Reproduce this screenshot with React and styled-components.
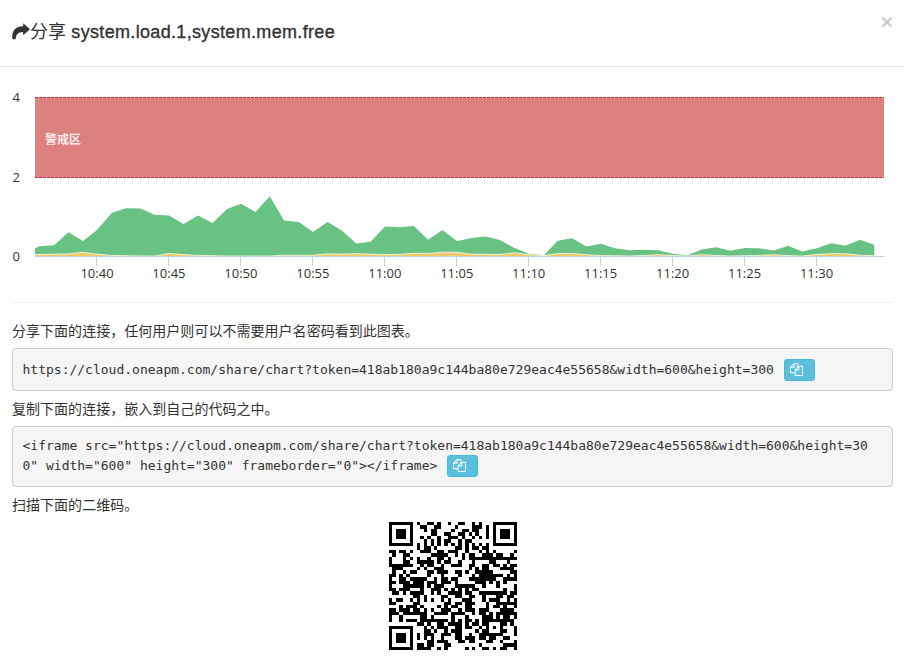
import React from "react";
import styled, { createGlobalStyle } from "styled-components";

const SHARE_URL =
  "https://cloud.oneapm.com/share/chart?token=418ab180a9c144ba80e729eac4e55658&width=600&height=300";
const EMBED_CODE = `<iframe src="${SHARE_URL}" width="600" height="300" frameborder="0"></iframe>`;

/* ---------- QR code, version 5, level L ---------- */
const SIZE = 37;
const DATA_WORDS = 108;
const EC_WORDS = 26;

const gfMul = (x, y) => {
  let z = 0;
  for (let i = 7; i >= 0; i--) {
    z = (z << 1) ^ ((z >>> 7) * 0x11d);
    z ^= ((y >>> i) & 1) * x;
  }
  return z;
};

function errorWords(data) {
  const div = new Array(EC_WORDS).fill(0);
  div[EC_WORDS - 1] = 1;
  let root = 1;
  for (let i = 0; i < EC_WORDS; i++) {
    for (let j = 0; j < EC_WORDS; j++) {
      div[j] = gfMul(div[j], root);
      if (j + 1 < EC_WORDS) div[j] ^= div[j + 1];
    }
    root = gfMul(root, 2);
  }
  const rem = new Array(EC_WORDS).fill(0);
  for (const b of data) {
    const f = b ^ rem.shift();
    rem.push(0);
    div.forEach((c, i) => {
      rem[i] ^= gfMul(c, f);
    });
  }
  return rem;
}

function codewords(text) {
  const bits = [];
  const push = (v, n) => {
    for (let i = n - 1; i >= 0; i--) bits.push((v >>> i) & 1);
  };
  push(4, 4);
  push(text.length, 8);
  for (const c of text) push(c.charCodeAt(0), 8);
  push(0, 4);
  while (bits.length % 8) bits.push(0);
  const data = [];
  for (let i = 0; i < bits.length; i += 8) data.push(parseInt(bits.slice(i, i + 8).join(""), 2));
  for (let p = 0xec; data.length < DATA_WORDS; p ^= 0xec ^ 0x11) data.push(p);
  return [...data, ...errorWords(data)];
}

// Mask pattern 6 of the QR specification.
const MASK = 6;
const masked = (x, y) => (((x * y) % 2) + ((x * y) % 3)) % 2 === 0;

function qrMatrix(text) {
  const m = Array.from({ length: SIZE }, () => new Array(SIZE).fill(null));
  const set = (x, y, v) => {
    if (x >= 0 && y >= 0 && x < SIZE && y < SIZE) m[y][x] = !!v;
  };
  for (let i = 0; i < SIZE; i++) {
    set(6, i, i % 2 === 0);
    set(i, 6, i % 2 === 0);
  }
  [[3, 3], [SIZE - 4, 3], [3, SIZE - 4]].forEach(([cx, cy]) => {
    for (let dy = -4; dy <= 4; dy++)
      for (let dx = -4; dx <= 4; dx++) {
        const d = Math.max(Math.abs(dx), Math.abs(dy));
        set(cx + dx, cy + dy, d !== 2 && d !== 4);
      }
  });
  for (let dy = -2; dy <= 2; dy++)
    for (let dx = -2; dx <= 2; dx++) set(30 + dx, 30 + dy, Math.max(Math.abs(dx), Math.abs(dy)) !== 1);

  const head = (1 << 3) | MASK;
  let rem = head;
  for (let i = 0; i < 10; i++) rem = (rem << 1) ^ ((rem >>> 9) * 0x537);
  const fmt = ((head << 10) | rem) ^ 0x5412;
  const bit = (i) => (fmt >>> i) & 1;
  for (let i = 0; i <= 5; i++) set(8, i, bit(i));
  set(8, 7, bit(6));
  set(8, 8, bit(7));
  set(7, 8, bit(8));
  for (let i = 9; i < 15; i++) set(14 - i, 8, bit(i));
  for (let i = 0; i < 8; i++) set(SIZE - 1 - i, 8, bit(i));
  for (let i = 8; i < 15; i++) set(8, SIZE - 15 + i, bit(i));
  set(8, SIZE - 8, 1);

  const words = codewords(text);
  let n = 0;
  for (let right = SIZE - 1; right >= 1; right -= 2) {
    if (right === 6) right = 5;
    for (let v = 0; v < SIZE; v++)
      for (let j = 0; j < 2; j++) {
        const x = right - j;
        const y = ((right + 1) & 2) === 0 ? SIZE - 1 - v : v;
        if (m[y][x] !== null) continue;
        const b = n < words.length * 8 ? (words[n >>> 3] >>> (7 - (n & 7))) & 1 : 0;
        n++;
        m[y][x] = !!b !== masked(x, y);
      }
  }
  return m;
}

function QrCode({ text, size }) {
  const u = size / SIZE;
  const d = qrMatrix(text)
    .flatMap((row, y) =>
      row.map((on, x) => {
        if (!on) return "";
        const x0 = Math.round(x * u);
        const x1 = Math.round((x + 1) * u);
        const y0 = Math.round(y * u);
        const y1 = Math.round((y + 1) * u);
        return `M${x0} ${y0}H${x1}V${y1}H${x0}z`;
      })
    )
    .join("");
  return (
    <svg width={size} height={size} shapeRendering="crispEdges">
      <path d={d} fill="#000" />
    </svg>
  );
}

/* ---------- Chart ---------- */
const LOAD = [
  [35, 248.5], [39.3, 246.3], [54, 245.3], [68.5, 232.3], [83, 241], [97, 230], [112, 212.7],
  [126, 208.3], [140.5, 208.5], [154.8, 214.7], [169, 215.5], [183.5, 224], [198, 215.5],
  [212.5, 223], [227, 209], [241, 203.7], [255.5, 212], [269.8, 196.3], [284, 220.5],
  [298.7, 222], [313, 232], [327.5, 222], [341.8, 230.5], [356.2, 243.5], [370.6, 241.7],
  [385, 226.5], [399.3, 227.2], [413.8, 226], [428.1, 239.8], [442.5, 230], [457, 241.3],
  [471.3, 238], [485.7, 236.5], [500, 240], [514.5, 248], [529, 253.7], [544, 255.3],
  [557.6, 240.8], [572, 238.3], [586.4, 246.4], [600.8, 243.7], [615, 248.3], [629.6, 250.2],
  [644, 249.8], [658.4, 250.2], [672.8, 253.7], [687.5, 255.3], [701.8, 249.5], [716, 247.3],
  [730.4, 250.7], [744.8, 248], [759, 248.3], [773.6, 250.5], [788, 245.8], [802.2, 251.4],
  [816.8, 248.2], [831, 243.3], [845.4, 245.7], [860, 239.7], [874.3, 244.8],
];
const MEMORY = [
  [35, 254.5], [54, 254.2], [68.5, 253.8], [83, 252.3], [97, 254.2], [112, 255.4], [141, 256],
  [155, 256], [169, 253.4], [183.5, 254.6], [198, 255.4], [227, 256], [270, 256], [284, 255.2],
  [313, 255.2], [327.5, 253.8], [342, 254.1], [356, 253.6], [385, 254.6], [399, 254.4],
  [413.8, 253.3], [428, 253.4], [442.5, 252.2], [457, 252.3], [471.3, 254.1], [500, 254.4],
  [514.5, 252.7], [529, 254.7], [544, 255.6], [557.6, 253.6], [572, 253.4], [586.4, 254.7],
  [601, 255.6], [630, 256], [644, 255.4], [658.4, 254.7], [673, 255.5], [687.5, 256],
  [701.8, 254.7], [716, 255.5], [730.4, 256], [759, 255.4], [773.6, 254.7], [788, 255.6],
  [802.2, 256], [816.8, 254.4], [831, 253.6], [845.4, 253.7], [860, 255.2], [874.3, 255.7],
];
const TIMES = ["10:40", "10:45", "10:50", "10:55", "11:00", "11:05", "11:10", "11:15", "11:20", "11:25", "11:30"];
const BASE = 256.5;

const line = (pts) => pts.map(([x, y]) => `${x} ${y}`).join("L");
const area = (pts) => `M${line(pts)}L${pts[pts.length - 1][0]} ${BASE}L${pts[0][0]} ${BASE}Z`;

function LoadChart() {
  return (
    <Plot width="904" height="222" viewBox="0 67 904 222">
      <rect x="35" y="97" width="849" height="81" fill="#dd817e" />
      <path d="M35 97.5H884M35 177.5H884" stroke="#e0e0e0" />
      <path d="M35 97.5H884M35 177.5H884" stroke="#c1272d" strokeDasharray="3 1" />
      <WarningText x="45" y="144">警戒区</WarningText>
      <path d={area(LOAD)} fill="#68c284" />
      <path d={area(MEMORY)} fill="#eecb69" />
      <path d={`M${line(MEMORY)}`} fill="none" stroke="#fff" strokeOpacity="0.75" />
      <path d="M35 256.5H884" stroke="#c0d0e0" />
      {TIMES.map((t, i) => (
        <g key={t}>
          <path d={`M${96.5 + 72 * i} 257V266`} stroke="#c0d0e0" />
          <AxisText x={97 + 71.95 * i} y="278" textAnchor="middle">{t}</AxisText>
        </g>
      ))}
      {[[4, 102], [2, 182], [0, 261]].map(([v, y]) => (
        <AxisText key={v} x="20" y={y} textAnchor="end">{v}</AxisText>
      ))}
    </Plot>
  );
}

const ShareIcon = () => (
  <svg width="18" height="18" viewBox="0 0 18 18">
    <path
      fill="#333"
      d="M11.2 .3 18 6.300 11.200 12.300V9.300C6.600 9.100 4.300 10.700 3.500 16.300H.4C-.4 8.500 2.800 3.500 11.200 3.300Z"
    />
  </svg>
);

const CopyIcon = () => (
  <svg width="13" height="13" viewBox="0 0 1792 1792">
    <path
      fill="#fff"
      d="M1696 384q40 0 68 28t28 68v1216q0 40-28 68t-68 28h-960q-40 0-68-28t-28-68v-288h-544q-40 0-68-28t-28-68v-672q0-40 20-88t48-76l408-408q28-28 76-48t88-20h416q40 0 68 28t28 68v328q68-40 128-40h416zm-544 213l-299 299h299v-299zm-640-384l-299 299h299v-299zm196 647l316-316v-416h-384v416q0 40-28 68t-68 28h-416v640h512v-256q0-40 20-88t48-76zm956 804v-1152h-384v416q0 40-28 68t-68 28h-416v640h896z"
    />
  </svg>
);

/* ---------- Layout ---------- */
const Global = createGlobalStyle`
  * { box-sizing: border-box; }
  body { margin: 0; background: #fff; overflow: hidden; }
`;

const Dialog = styled.div`
  width: 904px;
  height: 667px;
  overflow: hidden;
  color: #333;
  font: 14px/20px "Liberation Sans", "Noto Sans CJK SC", sans-serif;
`;

const Header = styled.header`
  display: flex;
  justify-content: space-between;
  height: 67px;
  padding: 0 11px 0 12px;
  border-bottom: 1px solid #e5e5e5;
`;

const Title = styled.h4`
  display: flex;
  align-items: center;
  height: 26px;
  margin: 19px 0 0;
  font-size: 18px;
  font-weight: 400;
  white-space: pre;
`;

const MetricNames = styled.span`
  letter-spacing: 0.33px;
  -webkit-text-stroke: 0.35px #333;
`;

const Close = styled.button`
  height: 20px;
  margin: 12px 0 0;
  padding: 0;
  border: 0;
  background: none;
  color: #ccc;
  font: 700 21px/20px "Liberation Sans", sans-serif;
`;

const Plot = styled.svg`
  display: block;
`;

const AxisText = styled.text`
  font: 13px "Open Sans", sans-serif;
  fill: #333;
`;

const WarningText = styled.text`
  font: 700 12px "Noto Sans CJK SC", sans-serif;
  fill: #fbeaea;
`;

const Divider = styled.hr`
  height: 1px;
  margin: 13px 11px 18px 12px;
  border: 0;
  background: #eee;
`;

const Body = styled.section`
  padding: 0 11px 0 12px;
`;

const Hint = styled.p`
  height: 20px;
  margin: 0;
  letter-spacing: 0.03px;
`;

const CodeBox = styled.div`
  height: ${(p) => p.$height}px;
  margin: 7px 0 8px;
  padding: ${(p) => p.$top}px 10px 0 9.5px;
  border: 1px solid #ccc;
  border-radius: 4px;
  background: #f5f5f5;
  font: 13px/20px "DejaVu Sans Mono", monospace;
  word-break: break-all;
`;

const CopyButton = styled.button`
  display: inline-flex;
  align-items: center;
  width: 31px;
  height: 22px;
  margin: ${(p) => p.$lift}px 0 -1px 10px;
  padding: 0 5px;
  border: 1px solid #46b8da;
  border-radius: 3px;
  background: #5bc0de;
  vertical-align: middle;
  transform: translateY(-1px);
`;

const QrHolder = styled.div`
  display: flex;
  justify-content: center;
  margin-top: 7px;
`;

export default function App() {
  return (
    <Dialog>
      <Global />
      <Header>
        <Title>
          <ShareIcon />分享<MetricNames> system.load.1,system.mem.free</MetricNames>
        </Title>
        <Close>×</Close>
      </Header>
      <LoadChart />
      <Divider />
      <Body>
        <Hint>分享下面的连接，任何用户则可以不需要用户名密码看到此图表。</Hint>
        <CodeBox $height={43} $top={11}>
          {SHARE_URL}
          <CopyButton $lift={-1}><CopyIcon /></CopyButton>
        </CodeBox>
        <Hint>复制下面的连接，嵌入到自己的代码之中。</Hint>
        <CodeBox $height={61} $top={9}>
          {EMBED_CODE}
          <CopyButton $lift={-1}><CopyIcon /></CopyButton>
        </CodeBox>
        <Hint>扫描下面的二维码。</Hint>
        <QrHolder>
          <QrCode text={SHARE_URL} size={128} />
        </QrHolder>
      </Body>
    </Dialog>
  );
}
